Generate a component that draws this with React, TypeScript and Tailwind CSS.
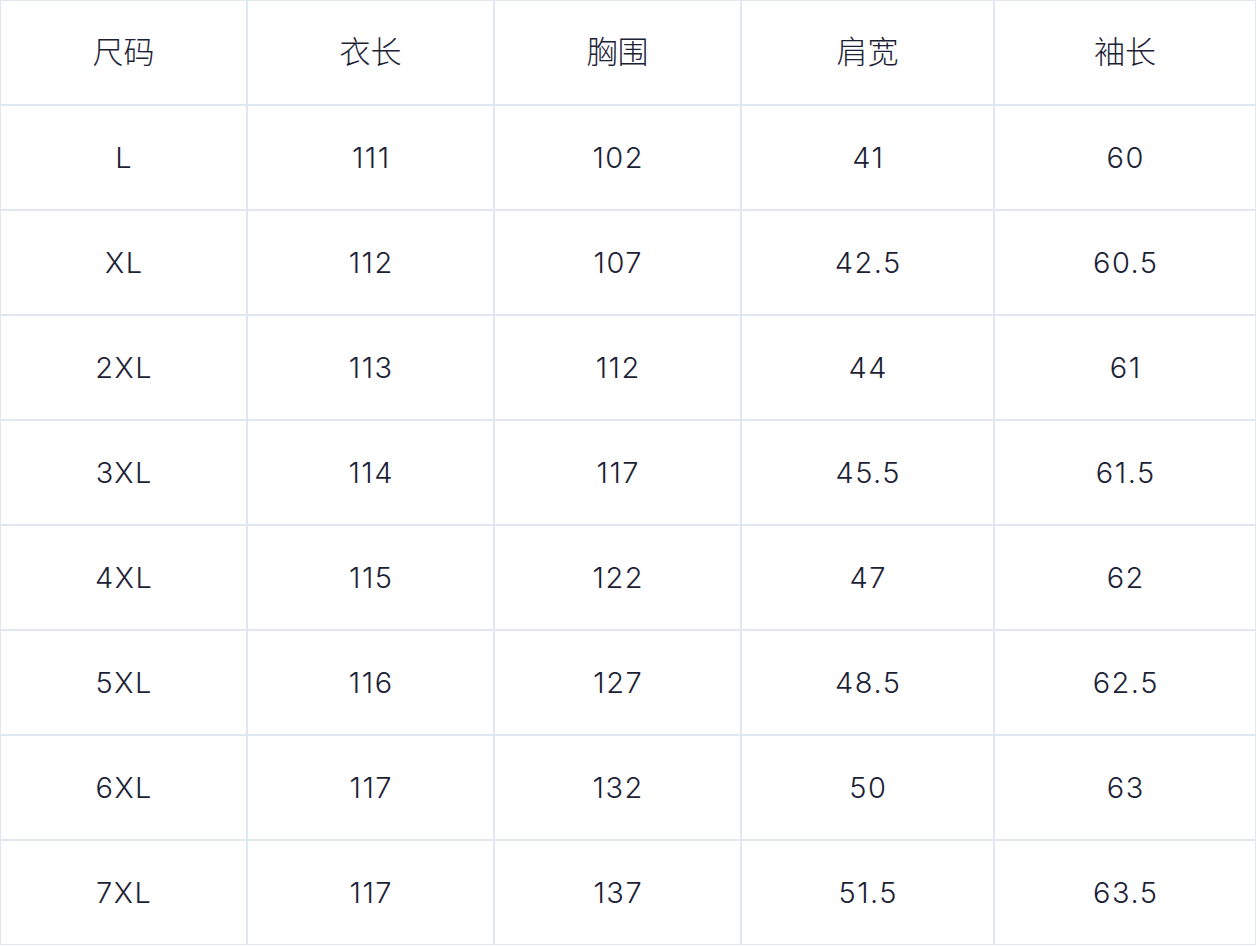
import React from "react";

const header = ["尺码", "衣长", "胸围", "肩宽", "袖长"];
const rows = [
  ["L", "111", "102", "41", "60"],
  ["XL", "112", "107", "42.5", "60.5"],
  ["2XL", "113", "112", "44", "61"],
  ["3XL", "114", "117", "45.5", "61.5"],
  ["4XL", "115", "122", "47", "62"],
  ["5XL", "116", "127", "48.5", "62.5"],
  ["6XL", "117", "132", "50", "63"],
  ["7XL", "117", "137", "51.5", "63.5"],
];

export default function App() {
  return (
    <div
      className="w-[1256px] h-[946px] bg-white text-[#1c2236]"
      style={{ fontFamily: 'Inter, "Noto Sans CJK SC", sans-serif' }}
    >
      <div className="grid grid-cols-[247px_247px_247px_253px_262px] auto-rows-[105px]">
        {header.map((h, i) => (
          <div
            key={"h" + i}
            className="border border-[#e1e7f0] flex items-center justify-center pb-[6px] text-[31px] leading-none font-light"
            style={{ fontFamily: '"Noto Sans CJK SC", sans-serif' }}
          >
            {h}
          </div>
        ))}
        {rows.map((r, ri) =>
          r.map((c, ci) => (
            <div
              key={ri + "-" + ci}
              className="border border-[#e1e7f0] flex items-center justify-center pl-[1.5px] text-[29px] leading-none font-[350] tracking-[1.5px]"
            >
              {c}
            </div>
          ))
        )}
      </div>
    </div>
  );
}
